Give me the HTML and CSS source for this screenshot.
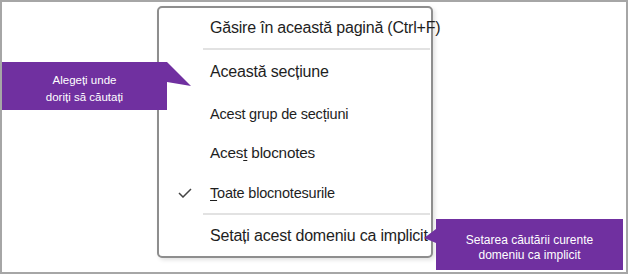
FILE: index.html
```html
<!DOCTYPE html>
<html>

<head>
    <title>Găsire - domeniu de căutare</title>
    <link rel="stylesheet" href="styles.css">
</head>

<body>
    <div class="frame">
        <ul class="menu">
            <li class="item item-first"><span class="mark"></span><span class="label">Găsire în această pagină (Ctrl+F)</span></li>
            <li class="sep"></li>
            <li class="item item-2"><span class="mark"></span><span class="label">Această secțiune</span></li>
            <li class="item item-3 small"><span class="mark"></span><span class="label">Acest grup de secțiuni</span></li>
            <li class="item item-4 mid"><span class="mark"></span><span class="label">Aces<u>t</u> blocnotes</span></li>
            <li class="item item-5 small">
                <span class="mark">
                    <svg width="14" height="10" viewBox="0 0 14 10"><polyline points="1,5 5,9 13,1" fill="none" stroke="#444" stroke-width="1.5"/></svg>
                </span>
                <span class="label"><u>T</u>oate blocnotesurile</span>
            </li>
            <li class="sep"></li>
            <li class="item item-6"><span class="mark"></span><span class="label">Setați acest domeniu ca implicit</span></li>
        </ul>

        <div class="callout callout-left">
            <div class="callout-text">Alegeți unde<br>doriți să căutați</div>
        </div>

        <div class="callout callout-right">
            <div class="callout-text">Setarea căutării curente<br>domeniu ca implicit</div>
        </div>
    </div>
</body>

</html>
```

FILE: styles.css
```css
body {
    margin: 0;
    font-family: "Liberation Sans", Arial, sans-serif;
    background: #fff;
}

.frame {
    position: relative;
    width: 628px;
    height: 274px;
    box-sizing: border-box;
    border: 2px solid #a6a6a6;
    overflow: hidden;
}

.menu {
    list-style: none;
    margin: 4px 0 0 155px;
    padding: 0;
    width: 276px;
    height: 252px;
    box-sizing: border-box;
    border: 2px solid #8e8e8e;
    border-radius: 5px;
    box-shadow: 2px 2px 4px rgba(0, 0, 0, 0.12);
    background: #fff;
}

.item {
    display: flex;
    align-items: center;
    color: #1e1e1e;
    font-size: 16px;
    letter-spacing: -0.2px;
    white-space: nowrap;
}

.item.small {
    font-size: 14.5px;
}

.item.mid {
    font-size: 15.3px;
}

.item u {
    text-decoration-thickness: 1px;
    text-underline-offset: 2px;
}

.item-first {
    height: 40px;
}

.item-2 {
    height: 44px;
}

.item-3 {
    height: 40px;
}

.item-4 {
    height: 38px;
}

.item-5 {
    height: 41px;
}

.item-6 {
    height: 41px;
}

.mark {
    width: 51px;
    flex-shrink: 0;
    display: flex;
    justify-content: center;
    align-items: center;
}

.sep {
    height: 2px;
    margin: 0 1px 0 44px;
    background: #e2e2e2;
}

.callout {
    position: absolute;
    background: #7030a0;
    color: #fff;
    text-align: center;
}

.callout-left {
    left: 0;
    top: 60px;
    width: 190px;
    height: 48px;
    clip-path: polygon(0 0, 165px 0, 189px 24px, 165px 20px, 165px 48px, 0 48px);
}

.callout-left .callout-text {
    width: 165px;
    padding-top: 10px;
    font-size: 11.5px;
    line-height: 17px;
}

.callout-right {
    left: 422px;
    top: 217px;
    width: 199px;
    height: 51px;
    clip-path: polygon(12px 0, 100% 0, 100% 100%, 12px 100%, 12px 24px, 0 19px, 12px 10px);
}

.callout-right .callout-text {
    padding: 14px 0 0 12px;
    font-size: 12px;
    line-height: 15px;
}
```
